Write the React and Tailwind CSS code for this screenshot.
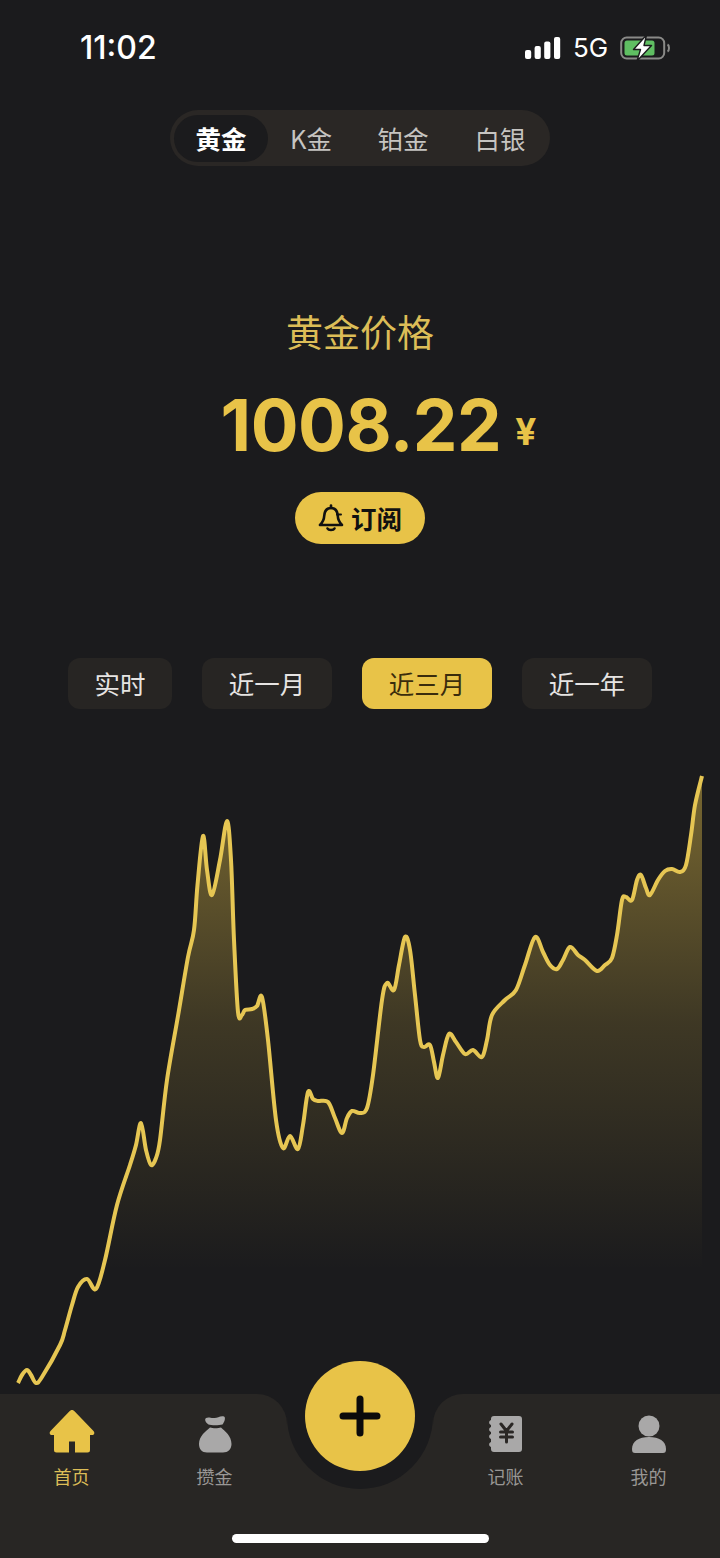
import React from "react";

const pts = [[18,1383],[22,1375],[27,1370],[31,1375],[36,1383],[42,1377],[60,1345],[65,1330],[72,1305],[78,1287],[87,1279],[96,1289],[105,1260],[117,1205],[130,1165],[136,1145],[141,1123],[146,1150],[151,1165],[156,1158],[160,1140],[167,1080],[178,1016],[188,957],[194,930],[197.5,885],[203,836],[207,870],[212,895],[220,860],[227,821],[231,860],[234,940],[238,1012],[242,1015],[245,1010],[252,1009],[257,1006],[262,997],[268,1040],[276,1120],[283,1148],[290,1136],[298,1149],[303,1125],[308,1092],[313,1099],[318,1101],[328,1102],[335,1118],[342,1133],[347,1118],[352,1111],[360,1113],[367,1108],[373,1075],[382,1000],[387,983],[394,990],[399,965],[405,937],[410,950],[415,995],[420,1040],[424,1047],[430,1045],[434,1062],[438,1078],[443,1055],[449,1034],[456,1042],[465,1054],[473,1050],[482,1057],[487,1040],[492,1015],[505,1000],[516,990],[525,965],[535,937],[543,952],[550,965],[557,969],[563,960],[570,947],[578,955],[585,960],[597,971],[605,965],[612,958],[617,935],[622,900],[626,897],[632,900],[637,880],[641,875],[646,888],[650,895],[658,880],[665,871],[672,869],[680,872],[686,865],[691,835],[695,805],[702,776]];

function smooth(p) {
  let d = `M${p[0][0]} ${p[0][1]}`;
  for (let i = 0; i < p.length - 1; i++) {
    const a = p[Math.max(0, i - 1)], b = p[i], c = p[i + 1], e = p[Math.min(p.length - 1, i + 2)];
    const c1x = b[0] + (c[0] - a[0]) / 6, c1y = b[1] + (c[1] - a[1]) / 6;
    const c2x = c[0] - (e[0] - b[0]) / 6, c2y = c[1] - (e[1] - b[1]) / 6;
    d += ` C${c1x.toFixed(1)} ${c1y.toFixed(1)} ${c2x.toFixed(1)} ${c2y.toFixed(1)} ${c[0]} ${c[1]}`;
  }
  return d;
}
const line = smooth(pts);
const area = `${line} L702 1394 L18 1394 Z`;

function StatusIcons() {
  return (
    <div className="flex items-center">
      <svg width="36" height="22" viewBox="0 0 36 22" fill="#fff">
        <rect x="0" y="13" width="6.2" height="9" rx="2" />
        <rect x="9.6" y="9" width="6.2" height="13" rx="2" />
        <rect x="19.2" y="4.5" width="6.2" height="17.5" rx="2" />
        <rect x="29" y="0" width="6.2" height="22" rx="2" />
      </svg>
      <span className="ml-[12px] w-[35px] text-[26px] leading-none text-white font-['Inter','Liberation_Sans',sans-serif]">5G</span>
      <svg className="ml-[12px]" width="50" height="26" viewBox="0 0 50 26">
        <rect x="1.2" y="2.5" width="43" height="21" rx="5.5" fill="none" stroke="#8a8a88" strokeWidth="2" />
        <rect x="4.5" y="5.5" width="30" height="15" rx="2.5" fill="#5fbe62" />
        <path d="M47.5 9.5 c2 1 2 6 0 7" fill="none" stroke="#8a8a88" strokeWidth="2" />
        <path d="M26.5 0 L13.5 14.5 H20.5 L17 26 L31.5 10.5 H24 Z" fill="#fff" stroke="#1b1b1d" strokeWidth="1.4" strokeLinejoin="round" />
      </svg>
    </div>
  );
}

function Bell() {
  return (
    <svg width="26" height="28" viewBox="0 0 26 28" fill="none" stroke="#111" strokeWidth="2.6" strokeLinecap="round" strokeLinejoin="round">
      <path d="M13 4 C8 4 6.5 8 6.2 12 C6 16 4.5 18.5 2 21 H24 C21.5 18.5 20 16 19.8 12 C19.5 8 18 4 13 4 Z" />
      <path d="M13 1.5 V4" />
      <path d="M9.5 24.5 C10.5 26.5 15.5 26.5 16.5 24.5" />
      <path d="M19 10.5 H23" strokeWidth="2" />
    </svg>
  );
}

function HomeIcon() {
  return (
    <svg width="46" height="43" viewBox="0 0 46 43" fill="#e8c348">
      <path fillRule="evenodd" d="M20.5 1.2 a3.5 3.5 0 0 1 5 0 L44.5 21 c1.6 1.8 .8 4 -1.5 4 H41 V40 a2.5 2.5 0 0 1 -2.5 2.5 H7.5 A2.5 2.5 0 0 1 5 40 V25 H3 c-2.3 0 -3.1 -2.2 -1.5 -4 Z M20 31.5 V42.5 H26 V31.5 Z" />
    </svg>
  );
}

function BagIcon() {
  return (
    <svg width="36" height="38" viewBox="0 0 36 38" fill="#a9a8a8">
      <path d="M9 3 C12 1.5 14 3.5 17 3 C20 3.5 23 0.5 27 1.5 C29 2.5 27.5 7 25.5 9.5 C22 10.5 14 10.5 11.5 9.5 C9 8 7 4.5 9 3 Z" />
      <path d="M13 12.5 C16 13.5 21 13.5 24 12.5 C28 16 34.5 21 34.5 29 C34.5 34 31 37.5 26 37.5 H10 C5 37.5 2 34 2 29 C2 21 9 16 13 12.5 Z" />
    </svg>
  );
}

function LedgerIcon() {
  return (
    <svg width="36" height="38" viewBox="0 0 36 38">
      <path fill="#a9a8a8" d="M6 1 H31 a3 3 0 0 1 3 3 V34 a3 3 0 0 1 -3 3 H6 a3 3 0 0 1 -3 -3 V32 c-2.5 -1 -2.5 -4 0 -5 V24 c-2.5 -1 -2.5 -4 0 -5 V17 c-2.5 -1 -2.5 -4 0 -5 V10 c-2.5 -1 -2.5 -4 0 -5 V4 a3 3 0 0 1 3 -3 Z" />
      <path fill="none" stroke="#2a2725" strokeWidth="3" strokeLinecap="round" d="M13 9 L18.5 16 L24 9 M18.5 16 V27 M12.5 17 H24.5 M12.5 22 H24.5" />
    </svg>
  );
}

function PersonIcon() {
  return (
    <svg width="36" height="38" viewBox="0 0 36 38" fill="#a9a8a8">
      <circle cx="18" cy="11" r="10.5" />
      <path d="M1 34 C1 26 8 22 18 22 C28 22 35 26 35 34 C35 37 34 38 32 38 H4 C2 38 1 37 1 34 Z" />
    </svg>
  );
}

function Tab({ icon, label, active }) {
  return (
    <div className="flex w-[143px] flex-col items-center">
      <div className="flex h-[44px] items-end">{icon}</div>
      <span className={`mt-[10px] text-[18px] leading-[26px] ${active ? "text-[#dcbd57]" : "text-[#999795]"}`}>{label}</span>
    </div>
  );
}

function Filter({ label, w, active }) {
  return (
    <div className={`flex h-[51px] items-center justify-center rounded-[12px] pb-[1px] text-[25.5px] ${w} ${active ? "bg-[#e8c348] text-[#3a2c0c]" : "bg-[#272523] text-[#e6e4e2]"}`}>
      {label}
    </div>
  );
}

export default function App() {
  return (
    <div className="relative flex h-[1558px] w-[720px] flex-col overflow-hidden bg-[#1b1b1d] font-['Noto_Sans_CJK_SC','Noto_Sans',sans-serif]">
      <div className="flex h-[96px] items-center justify-between pl-[80px] pr-[50px]">
        <span className="text-[32px] font-medium leading-none text-white font-['Inter','Liberation_Sans',sans-serif]">11:02</span>
        <StatusIcons />
      </div>

      <div className="mx-auto mt-[14px] flex h-[56px] w-[380px] items-center rounded-full bg-[#2a2725] pl-[4px] text-[25.5px] text-[#c6c4c1]">
        <div className="flex h-[47px] w-[94px] items-center justify-center rounded-full bg-[#1b1b1d] font-bold text-white">黄金</div>
        <div className="flex w-[86px] justify-center">K金</div>
        <div className="flex w-[98px] justify-center">铂金</div>
        <div className="flex w-[96px] justify-center">白银</div>
      </div>

      <div className="mt-[140px] text-center text-[37px] leading-[50px] text-[#dcbd57]">黄金价格</div>

      <div className="mt-[29px] flex h-[80px] items-center justify-center pl-[37px] text-[#e8c348] font-['Inter','Liberation_Sans',sans-serif]">
        <span className="text-[71px] font-bold leading-none tracking-[-0.5px]">1008.22</span>
        <span className="ml-[14px] mt-[12px] text-[37px] font-bold leading-none">¥</span>
      </div>

      <div className="mx-auto mt-[27px] flex h-[52px] w-[130px] items-center justify-center gap-[7px] rounded-full bg-[#e8c348] text-[25.5px] font-bold text-[#111]">
        <Bell />
        <span>订阅</span>
      </div>

      <div className="mt-[114px] flex justify-between px-[68px]">
        <Filter label="实时" w="w-[104px]" />
        <Filter label="近一月" w="w-[130px]" />
        <Filter label="近三月" w="w-[130px]" active />
        <Filter label="近一年" w="w-[130px]" />
      </div>

      <svg className="mt-[51px] block" width="720" height="634" viewBox="0 760 720 634">
        <defs>
          <linearGradient id="fade" gradientUnits="userSpaceOnUse" x1="0" y1="776" x2="0" y2="1270">
            <stop offset="0" stopColor="#e8c348" stopOpacity="0.46" />
            <stop offset="0.5" stopColor="#e8c348" stopOpacity="0.17" />
            <stop offset="1" stopColor="#e8c348" stopOpacity="0" />
          </linearGradient>
        </defs>
        <path d={area} fill="url(#fade)" />
        <path d={line} fill="none" stroke="#e6c653" strokeWidth="4" strokeLinejoin="round" />
      </svg>

      <div className="flex h-[164px] w-full">
        <div className="flex w-[287px] rounded-tr-[30px] bg-[#282624] pt-[15px]">
          <Tab icon={<HomeIcon />} label="首页" active />
          <Tab icon={<BagIcon />} label="攒金" />
        </div>
        <div className="mt-[22px] w-[146px] bg-[#282624]">
          <div className="h-[73px] w-[146px] rounded-b-[73px] bg-[#1b1b1d]" />
        </div>
        <div className="flex w-[287px] rounded-tl-[30px] bg-[#282624] pl-[1px] pt-[15px]">
          <Tab icon={<LedgerIcon />} label="记账" />
          <Tab icon={<PersonIcon />} label="我的" />
        </div>
      </div>

      <div className="absolute left-[305px] top-[1361px] flex h-[110px] w-[110px] items-center justify-center rounded-full bg-[#e8c348]">
        <svg width="42" height="42" viewBox="0 0 42 42" stroke="#0b0b0b" strokeWidth="7" strokeLinecap="round">
          <path d="M21 4 V38 M4 21 H38" />
        </svg>
      </div>

      <div className="absolute left-[232px] top-[1534px] h-[9px] w-[257px] rounded-full bg-white" />
    </div>
  );
}
